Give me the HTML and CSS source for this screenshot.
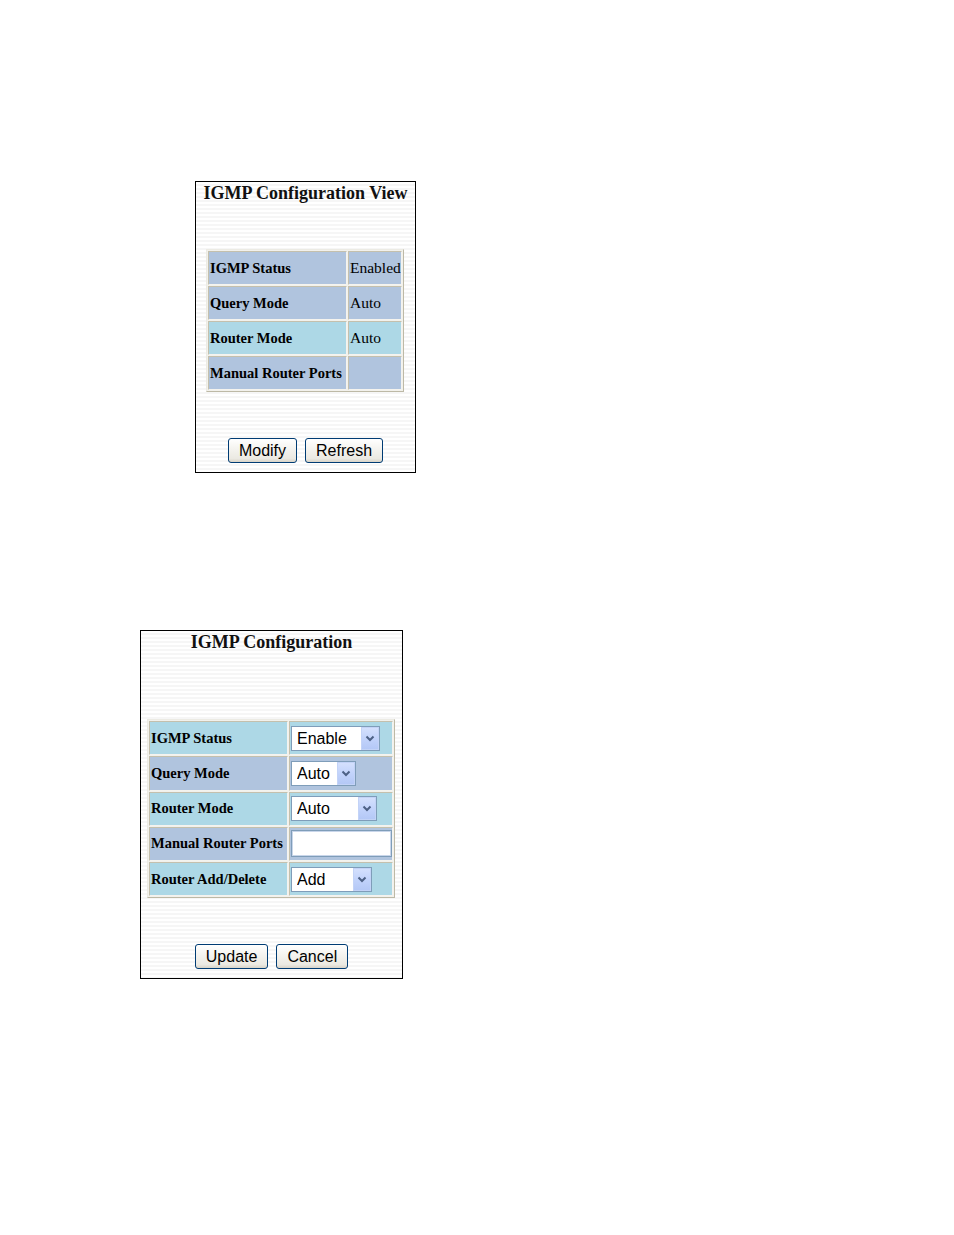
FILE: index.html
```html
<!DOCTYPE html>
<html>
<head>
<meta charset="utf-8">
<link rel="stylesheet" href="styles.css">
</head>
<body>
<div class="page">
  <div class="panel panel-view">
    <div class="title">IGMP Configuration View</div>
    <table class="grid grid-view">
      <tr class="steel"><td class="label">IGMP Status</td><td class="value">Enabled</td></tr>
      <tr class="steel"><td class="label">Query Mode</td><td class="value">Auto</td></tr>
      <tr class="light"><td class="label">Router Mode</td><td class="value">Auto</td></tr>
      <tr class="steel"><td class="label">Manual Router Ports</td><td class="value"></td></tr>
    </table>
    <div class="buttons">
      <button class="btn">Modify</button>
      <button class="btn">Refresh</button>
    </div>
  </div>

  <div class="panel panel-edit">
    <div class="title">IGMP Configuration</div>
    <table class="grid grid-edit">
      <tr class="light"><td class="label">IGMP Status</td><td class="value">
        <span class="sel w-enable"><select><option>Enable</option><option>Disable</option></select><span class="arrow"><svg width="10" height="7" viewBox="0 0 10 7"><path d="M1.5 1.5 L5 5 L8.5 1.5" fill="none" stroke="#4d6185" stroke-width="2"/></svg></span></span>
      </td></tr>
      <tr class="steel"><td class="label">Query Mode</td><td class="value">
        <span class="sel w-query"><select><option>Auto</option></select><span class="arrow"><svg width="10" height="7" viewBox="0 0 10 7"><path d="M1.5 1.5 L5 5 L8.5 1.5" fill="none" stroke="#4d6185" stroke-width="2"/></svg></span></span>
      </td></tr>
      <tr class="light"><td class="label">Router Mode</td><td class="value">
        <span class="sel w-router"><select><option>Auto</option></select><span class="arrow"><svg width="10" height="7" viewBox="0 0 10 7"><path d="M1.5 1.5 L5 5 L8.5 1.5" fill="none" stroke="#4d6185" stroke-width="2"/></svg></span></span>
      </td></tr>
      <tr class="steel"><td class="label">Manual Router Ports</td><td class="value">
        <input class="text" type="text">
      </td></tr>
      <tr class="light"><td class="label">Router Add/Delete</td><td class="value">
        <span class="sel w-add"><select><option>Add</option><option>Delete</option></select><span class="arrow"><svg width="10" height="7" viewBox="0 0 10 7"><path d="M1.5 1.5 L5 5 L8.5 1.5" fill="none" stroke="#4d6185" stroke-width="2"/></svg></span></span>
      </td></tr>
    </table>
    <div class="buttons">
      <button class="btn">Update</button>
      <button class="btn">Cancel</button>
    </div>
  </div>
</div>
</body>
</html>
```

FILE: styles.css
```css
html, body {
  margin: 0;
  padding: 0;
  background: #fff;
}

.page {
  padding-top: 181px;
}

.panel {
  box-sizing: border-box;
  border: 1px solid #000;
  background: repeating-linear-gradient(to bottom, #ffffff 0, #ffffff 2px, #f6f6f6 2px, #f6f6f6 4px);
  display: flex;
  flex-direction: column;
  align-items: center;
}

.panel-view {
  margin-left: 195px;
  width: 221px;
  height: 292px;
}

.panel-edit {
  margin-left: 140px;
  margin-top: 157px;
  width: 263px;
  height: 349px;
}

.title {
  font-family: "Liberation Serif", "Times New Roman", serif;
  font-weight: bold;
  font-size: 18px;
  line-height: 20px;
  padding-top: 1px;
  color: #111;
  white-space: nowrap;
  text-align: center;
}

.grid {
  border-collapse: separate;
  border-spacing: 1px;
  border: 1px solid;
  border-color: #ecebe4 #bdb9a6 #bdb9a6 #ecebe4;
  background: #f2f1ec;
  table-layout: fixed;
  align-self: flex-start;
}

.grid-view {
  margin-top: 46px;
  margin-left: 10px;
  width: 198px;
}

.grid-edit {
  margin-top: 67px;
  margin-left: 6px;
  width: 248px;
}

.grid td {
  box-sizing: border-box;
  height: 34px;
  padding: 0 1px;
  border: 1px solid;
  border-color: #c4c0ad #f4f3ee #f4f3ee #c4c0ad;
  vertical-align: middle;
  color: #000;
  white-space: nowrap;
  overflow: hidden;
}

.grid-edit td {
  height: 34.25px;
}

.grid td.label {
  width: 139px;
  font-family: "Liberation Serif", "Times New Roman", serif;
  font-weight: bold;
  font-size: 14.5px;
}

.grid td.value {
  font-family: "Liberation Serif", "Times New Roman", serif;
  font-size: 15.5px;
}

.steel td {
  background: #b0c4de;
}

.light td {
  background: #add8e6;
}

.sel {
  position: relative;
  display: inline-block;
  vertical-align: middle;
  height: 25px;
}

.sel select {
  -webkit-appearance: none;
  appearance: none;
  box-sizing: border-box;
  height: 25px;
  width: 100%;
  margin: 0;
  border: 1px solid #7f9db9;
  border-radius: 0;
  background: #fff;
  padding: 0 0 0 5px;
  font-family: "Liberation Sans", Arial, sans-serif;
  font-size: 16px;
  color: #000;
  outline: none;
}

.sel .arrow {
  position: absolute;
  top: 1px;
  right: 1px;
  bottom: 1px;
  width: 18px;
  box-sizing: border-box;
  border: 1px solid #c3d3f7;
  background: linear-gradient(to bottom, #d4e0fd 0%, #c2d3fb 50%, #b4c8f6 100%);
  display: flex;
  align-items: center;
  justify-content: center;
  pointer-events: none;
}

.w-enable { width: 89px; }
.w-query { width: 65px; }
.w-router { width: 86px; }
.w-add { width: 81px; }

.text {
  box-sizing: border-box;
  display: block;
  width: 101px;
  height: 27px;
  margin: 0;
  border: 1px solid #7f9db9;
  box-shadow: inset 0 0 0 1px #c9d6ea;
  background: #fff;
  padding: 0 4px;
  font-family: "Liberation Sans", Arial, sans-serif;
  font-size: 16px;
  outline: none;
}

.buttons {
  display: flex;
  gap: 8px;
  margin-top: 46px;
}

.btn {
  box-sizing: border-box;
  height: 25px;
  padding: 0 10px;
  margin: 0;
  border: 1px solid #003c74;
  border-radius: 3px;
  background: linear-gradient(to bottom, #ffffff 0%, #f5f4f0 40%, #ebe9e2 85%, #d8d3c8 100%);
  font-family: "Liberation Sans", Arial, sans-serif;
  font-size: 16px;
  line-height: 22px;
  color: #000;
}
```
